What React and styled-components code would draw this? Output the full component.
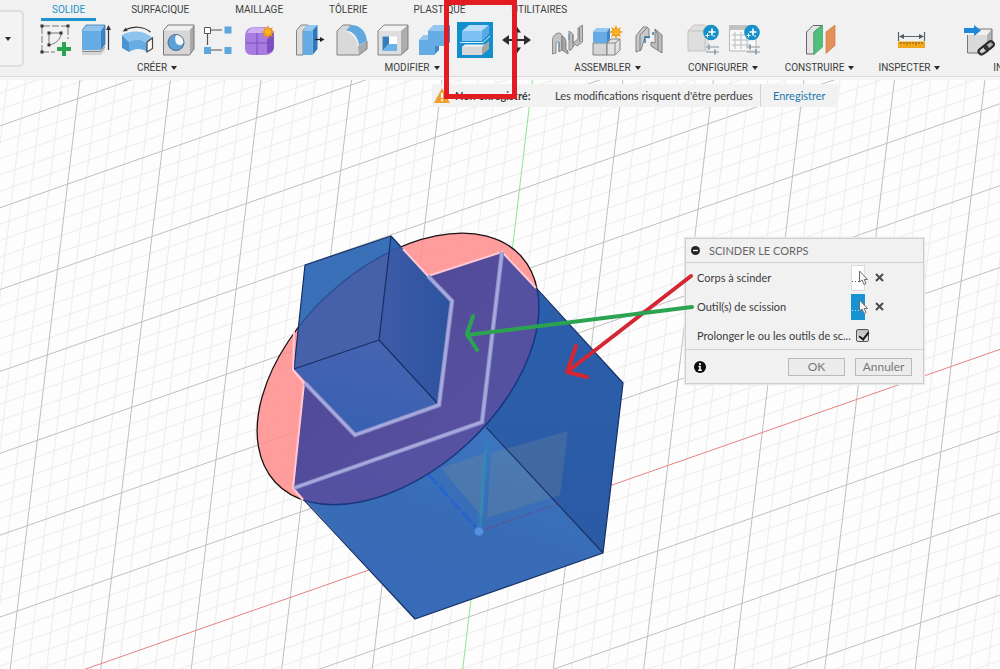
import React from 'react';
import styled, { createGlobalStyle, css } from 'styled-components';

const GlobalStyle = createGlobalStyle`
  * { box-sizing: border-box; }
  html, body { margin: 0; padding: 0; }
  body {
    font-family: Roboto, "Liberation Sans", Arial, sans-serif;
    color: #3c3c3c;
    background: #fdfdfd;
    overflow: hidden;
  }
  button { font-family: inherit; color: inherit; }
`;

const Page = styled.div`
  position: relative;
  display: flex;
  flex-direction: column;
  min-height: 100vh;
  overflow: hidden;
`;

const Toolbar = styled.header`
  display: flex;
  height: 80px;
  background: #f1f1f1;
  border-bottom: 3px solid #f6f6f6;
  box-shadow: inset 0 -1px 0 #dadada;
  overflow: hidden;
`;

const WorkspaceButton = styled.button`
  flex: none;
  display: flex;
  align-items: center;
  width: 24px;
  height: 57px;
  margin: 10px 8px 0 0;
  padding: 0 0 0 5px;
  background: #f3f3f3;
  border: 2px solid #dedede;
  border-left: 0;
  border-radius: 0 5px 5px 0;
`;

const Caret = styled.span`
  display: inline-block;
  flex: none;
  border: 3px solid transparent;
  border-top: 4px solid #2b2b2b;
  border-bottom: 0;
`;

const Ribbon = styled.div`
  flex: 1;
  min-width: 0;
`;

const Tabs = styled.nav`
  display: flex;
  gap: 24px;
  height: 22px;
  padding-left: 9px;
`;

const Tab = styled.a`
  flex: none;
  height: 21px;
  padding: 0 11px;
  border-bottom: 3px solid ${(p) => (p.$active ? '#1f93cb' : 'transparent')};
  font-size: 10px;
  line-height: 19px;
  color: ${(p) => (p.$active ? '#2393c8' : '#3f3f3f')};
  text-decoration: none;
`;

const Groups = styled.div`
  display: flex;
`;

const Group = styled.section`
  flex: none;
  width: ${(p) => p.$width}px;
  display: flex;
  flex-direction: column;
  align-items: ${(p) => (p.$start ? 'flex-start' : 'center')};
  position: relative;
  & + &::before {
    content: '';
    position: absolute;
    left: 0;
    top: 2px;
    height: 48px;
    border-left: 1px solid #d9d9d9;
  }
`;

const Tools = styled.div`
  display: flex;
  padding-left: ${(p) => (p.$start ? 5 : 0)}px;
`;

const ToolButton = styled.button`
  flex: none;
  width: 41px;
  height: 36px;
  padding: 0;
  border: 0;
  background: none;
  svg { display: block; }
`;

const GroupLabel = styled.button`
  display: flex;
  align-items: center;
  align-self: center;
  gap: 4px;
  margin-top: 2px;
  padding: 0 2px 0 0;
  border: 0;
  background: none;
  font-size: 10px;
  line-height: 16px;
`;

const Viewport = styled.main`
  position: relative;
  flex: 1;
  min-height: 589px;
`;

const Scene = styled.svg`
  position: absolute;
  inset: 0;
  width: 100%;
  height: 100%;
`;

const SaveBar = styled.div`
  position: absolute;
  left: 432px;
  top: 4px;
  display: flex;
  align-items: center;
  height: 23px;
  background: #f2f2f2;
  font-family: Lato, "Liberation Sans", Arial, sans-serif;
  font-size: 11px;
  line-height: 23px;
  white-space: nowrap;
`;

const WarningIcon = styled.svg`
  margin: 0 5px 0 2px;
`;

const SaveTitle = styled.strong`
  width: 100px;
`;

const SaveText = styled.span`
  width: 206px;
  border-right: 1px solid #d4d4d4;
`;

const SaveLink = styled.a`
  padding: 0 12px;
  color: #2079ae;
  text-decoration: none;
`;

const Dialog = styled.form`
  position: absolute;
  left: 685px;
  top: 158px;
  width: 239px;
  background: #f1f1f1;
  border: 1px solid #cfcfcf;
  box-shadow: 0 0 1px 1px #e8e8e8;
  font-family: Lato, "Liberation Sans", Arial, sans-serif;
  font-size: 11px;
`;

const DialogHeader = styled.h2`
  display: flex;
  align-items: center;
  gap: 9px;
  height: 24px;
  margin: 0;
  padding-left: 5px;
  border-bottom: 1px solid #cfcfcf;
  font-size: 11px;
  font-weight: 400;
  color: #666;
`;

const DialogBody = styled.div`
  padding: 0 11px;
`;

const Field = styled.div`
  display: flex;
  align-items: center;
  height: 29px;
`;

const FieldLabel = styled.label`
  width: ${(p) => (p.$wide ? 159 : 154)}px;
  white-space: nowrap;
`;

const PickButton = styled.button`
  display: block;
  width: 20px;
  height: 26px;
  padding: 0;
  border: 0;
  background: none;
  svg { display: block; }
`;

const ClearButton = styled.button`
  display: block;
  width: 9px;
  height: 9px;
  margin-left: 4px;
  padding: 0;
  border: 0;
  background: none;
  svg { display: block; }
`;

const Check = styled.input`
  appearance: none;
  width: 13px;
  height: 13px;
  margin: 0;
  border: 1px solid #555;
  border-radius: 2px;
  background: linear-gradient(#bdbdbd, #e4e4e4);
  position: relative;
  &:checked::after {
    content: '';
    position: absolute;
    left: 4px;
    top: 0;
    width: 4px;
    height: 8px;
    border: solid #161616;
    border-width: 0 2px 2px 0;
    transform: rotate(38deg);
  }
`;

const DialogFooter = styled.footer`
  display: flex;
  align-items: center;
  gap: 10px;
  height: 34px;
  margin-top: -1px;
  padding: 0 11px 0 8px;
  border-top: 1px solid #cfcfcf;
`;

const FooterButton = styled.button`
  width: 57px;
  height: 18px;
  padding: 0;
  border: 1px solid #b9b9b9;
  background: #ececec;
  color: #777;
  font-size: 12px;
  line-height: 16px;
  ${(p) => p.$first && css`margin-left: auto;`}
`;

const Annotations = styled.svg`
  position: absolute;
  inset: 0;
  width: 100%;
  height: 100%;
  pointer-events: none;
`;

/* ---------- ribbon icons, drawn on a 41 x 36 cell ---------- */

const Icon = ({ children }) => (
  <svg width="41" height="36" viewBox="0 0 41 36" aria-hidden="true">{children}</svg>
);

const Star = ({ x, y }) => (
  <g transform={`translate(${x} ${y})`}>
    <path d="M0-7 1.5-3 5-5 3.4-1.4 7 0 3.4 1.4 5 5 1.5 3.4 0 7-1.5 3.4-5 5-3.4 1.4-7 0-3.4-1.4-5-5-1.5-3Z" fill="#f29a11" />
    <circle r="2.8" fill="#fbb52c" />
  </g>
);

const SketchIcon = () => (
  <Icon>
    <path d="M7 30V4H33V17M7 30H20" fill="none" stroke="#777" strokeDasharray="7 2" />
    <path d="M14 23V11H26C26 17 21 22 14 23Z" fill="none" stroke="#777" />
    <g fill="#333">
      <path d="M5.500 2.500h3v3h-3zM31.500 2.500h3v3h-3zM5.500 28.500h3v3h-3zM12.500 9.500h3v3h-3zM24.500 9.500h3v3h-3zM12.500 21.500h3v3h-3z" />
    </g>
    <path d="M27 20h4v5h5v4h-5v5h-4v-5h-5v-4h5z" fill="#2aa54b" />
  </Icon>
);

const ExtrudeIcon = () => (
  <Icon>
    <path d="M6 28H25L29 22V28L25 33H6Z" fill="#d5d5d5" />
    <path d="M6 29.500H25L29 24.500" fill="none" stroke="#8d8d8d" />
    <path d="M6 8.500 10 3H29L25 8.500Z" fill="#8dc4ef" />
    <path d="M25 8.500 29 3V22.500L25 28Z" fill="#3c83c4" />
    <path d="M6 8.500H25V28H6Z" fill="#64ace3" />
    <path d="M6 8.500 10 3H29V22.500" fill="none" stroke="#4179a8" strokeWidth=".8" />
    <path d="M32.500 28V6" stroke="#333" strokeWidth="1.2" />
    <path d="M32.500 3 35 8H30Z" fill="#333" />
  </Icon>
);

const RevolveIcon = () => (
  <Icon>
    <path d="M5 13C13 8 27 8 35.500 16L30 21C25 17 18 17 12 20Z" fill="#8dc4ef" />
    <path d="M5 13 12 20V30L5 26Z" fill="#4a92d0" />
    <path d="M12 20C18 16.500 25 17 30 21V30C25 26 18 26 12 30Z" fill="#64ace3" />
    <path d="M30 20 35.500 16V26.500L30 30Z" fill="#fff" stroke="#444" strokeWidth="1.200" />
    <path d="M8 8C16 4 26 4 33.500 10" fill="none" stroke="#333" strokeWidth="1.200" />
    <path d="M5.500 9.500 9 5.500 10.500 9Z" fill="#333" />
  </Icon>
);

const HoleIcon = () => (
  <Icon>
    <path d="M5.500 8.500 10 3H36L31.500 8.500Z" fill="#f0f0f0" />
    <path d="M31.500 8.500 36 3V27L31.500 33Z" fill="#a9a9a9" />
    <path d="M5.500 8.500H31.500V33H5.500Z" fill="#d6d6d6" />
    <path d="M5.500 8.500 10 3H36V27L31.500 33H5.500Z" fill="none" stroke="#777" />
    <circle cx="18" cy="20.500" r="8" fill="#5c9fd9" stroke="#55687a" />
    <path d="M18 13A7.500 7.500 0 0 1 25.500 20C25 23 22 24 19.500 22.500C17 20.500 16.500 16 18 13Z" fill="#f5f8fb" />
  </Icon>
);

const PatternIcon = () => (
  <Icon>
    <path d="M12 8H25M8.500 12V24M12 28H25" stroke="#555" strokeWidth="1.200" strokeDasharray="11 2" />
    <path d="M5.500 5.500h6v6h-6z" fill="#fff" stroke="#555" />
    <path d="M25.500 4.500h7v7h-7zM5 25h7v7h-7zM25.500 25h7v7h-7z" fill="#5ba7de" />
  </Icon>
);

const FormIcon = () => (
  <Icon>
    <path d="M5 15C5 7 10 5 16 5H26C32 5 34 9 34 14V24C34 30 30 33 25 33H12C7 33 5 30 5 26Z" fill="#a77be0" />
    <path d="M7 11C9 6 13 5 18 5.500H27C31 6 32 8 27 11Z" fill="#cdb0f3" />
    <path d="M27 12C31 8 34 9 34 14V24C34 29 31 31 27 31Z" fill="#7d4fc0" />
    <path d="M17 11V33M6 21H27L34 16" fill="none" stroke="#7b4fc0" />
    <Star x={28} y={10} />
  </Icon>
);

const PressPullIcon = () => (
  <Icon>
    <path d="M6.500 8.500 11 3H18L13 8.500V33H6.500Z" fill="#dcdcdc" stroke="#777" strokeWidth=".9" />
    <path d="M13 8.500 17.500 3H27.500L22.500 8.500Z" fill="#93c8f2" />
    <path d="M22.500 8.500 27.500 3V27L22.500 33Z" fill="#2e78bd" />
    <path d="M13 8.500H22.500V33H13Z" fill="#64ace3" />
    <path d="M25 17.500H31" stroke="#222" strokeWidth="1.300" />
    <path d="M34.500 17.500 30 15V20Z" fill="#222" />
  </Icon>
);

const FilletIcon = () => (
  <Icon>
    <path d="M6 9 12 3H20L22 7L14 9C21 11 26 17 27 24L36 20V27L28 33H6Z" fill="#d9d9d9" />
    <path d="M27 24 36 19V27L28 33Z" fill="#ababab" />
    <path d="M15 8.500 20 3C29 3 35 9 36 19L28 23C27 15 22 9 15 8.500Z" fill="#60a8df" />
    <path d="M20 3H12L6 9V33H28L36 27V19" fill="none" stroke="#777" strokeWidth=".9" />
  </Icon>
);

const ShellIcon = () => (
  <Icon>
    <path d="M6 9 12 3H36L29 9Z" fill="#f2f2f2" />
    <path d="M29 9 36 3V27L29 33Z" fill="#adadad" />
    <path d="M6 9H29V33H6Z" fill="#dedede" />
    <path d="M6 9 12 3H36V27L29 33H6Z" fill="none" stroke="#777" strokeWidth=".9" />
    <path d="M10.500 14.500H25V29H10.500Z" fill="#fff" />
    <path d="M10.500 14.500H17V22L10.500 29Z" fill="#347cbd" />
    <path d="M10.500 29 17 22H25V29Z" fill="#6bb2e8" />
  </Icon>
);

const CombineIcon = () => (
  <Icon>
    <path d="M6 18 11 13H15V9L21 3H37V20L33 24H26V28L21 33H6Z" fill="#3f86c6" />
    <path d="M6 18H15V9H32V24H22V33H6Z" fill="#64ace3" />
    <path d="M6 18 11 13H15V18ZM15 9 21 3H37L32 9Z" fill="#93c8f2" />
  </Icon>
);

const SplitIcon = () => (
  <Icon>
    <path d="M3 0H39V36H3Z" fill="#148fcd" />
    <path d="M8 9 15 3H35L28 9Z" fill="#b3dcfb" />
    <path d="M28 9 35 3V12L28 19Z" fill="#5aa9e2" />
    <path d="M8 9H28V19H8Z" fill="#7dc0f2" />
    <path d="M6 20.500H29L36 14" fill="none" stroke="#d9eefb" />
    <path d="M8 25 11 22.500H31L28 25Z" fill="#f4f4f4" />
    <path d="M28 25 35 19V27L28 33Z" fill="#a6a6a6" />
    <path d="M8 24.500H28V33H8Z" fill="#d8d8d8" />
  </Icon>
);

const MoveIcon = () => (
  <Icon>
    <path d="M12 18H31M21.500 9V27" stroke="#2d2d2d" strokeWidth="2" />
    <path d="M7 18 14 13V23ZM36 18 29 13V23ZM21.500 4 17 10.500H26ZM21.500 32 17 25.500H26Z" fill="#2d2d2d" />
  </Icon>
);

const JointIcon = () => (
  <Icon>
    <g stroke="#777" strokeWidth=".8" strokeLinejoin="round">
      <path d="M5.500 32V18C6 13 9 11 13 11L15 13V28L12 30V21C10 19 9 20 9 22V31Z" fill="#c4c4c4" />
      <path d="M15 14C18 15 19 18 19 21V27L21 29V32L15 28Z" fill="#a5a5a5" />
      <path d="M22 28V9L26 12V21L31 17V6L35.500 3V20L30 24L28 22L24 28Z" fill="#bdbdbd" />
      <path d="M26 13V25M32.500 6V20" fill="none" />
    </g>
    <path d="M12 20V29M22 12V18" stroke="#5d8fb0" />
  </Icon>
);

const ComponentIcon = () => (
  <Icon>
    <path d="M5 21H19V33H5Z" fill="#d5d5d5" stroke="#777" strokeWidth=".9" />
    <path d="M19 21 23 17H32V28L27 33H19Z" fill="#e2e2e2" stroke="#777" strokeWidth=".9" />
    <path d="M19 21H27L32 17M27 21V33" fill="none" stroke="#888" />
    <path d="M5 10 9 6H22V17L19 21H5Z" fill="#3f86c6" />
    <path d="M5 10H19V21H5Z" fill="#64ace3" />
    <path d="M5 10 9 6H22L19 10Z" fill="#93c8f2" />
    <Star x={28} y={10} />
  </Icon>
);

const AsBuiltIcon = () => (
  <Icon>
    <g stroke="#777" strokeWidth=".9" strokeLinejoin="round">
      <path d="M7 14 14 5H18L20 7V16L16 15L12 28L7 30Z" fill="#c8c8c8" />
      <path d="M11 13 18 6M11 13V29" fill="none" />
      <path d="M26 7 33 13V31L22 24V20L26 21Z" fill="#bdbdbd" />
      <path d="M26 7 29 13V28" fill="none" />
    </g>
    <path d="M16 21V15H21M24 10V13" fill="none" stroke="#2674a9" strokeWidth="1.400" />
  </Icon>
);

const Badge = () => (
  <g>
    <circle cx="28" cy="10.500" r="7.800" fill="#1590c8" />
    <path d="M29 6.500V13.500M25.500 10H32.500" stroke="#fff" strokeWidth="1.600" />
    <path d="M24.500 11.500V15.500M22.500 13.500H26.500M31 13V15" stroke="#fff" />
    <path d="M23 25H36M23 30H36" stroke="#a9b3ba" strokeWidth="1.400" />
    <path d="M26 22.500V27.500M32 27.500V32.500" stroke="#8da4b5" strokeWidth="2" />
  </g>
);

const ConfigureIcon = () => (
  <Icon>
    <path d="M5 9 11 3H26V29H5Z" fill="#dedede" />
    <path d="M5 9H22V29H5ZM5 9 11 3H22" fill="none" stroke="#c2c2c2" />
    <Badge />
  </Icon>
);

const TableIcon = () => (
  <Icon>
    <path d="M5.500 3.500H32V29H5.500Z" fill="#f8f8f8" stroke="#b5b5b5" />
    <path d="M5 3H32V8H5Z" fill="#c2c2c2" />
    <path d="M7 5h3M8 13H26M8 18H26M8 23H26M11 10V27M17 10V27M23 10V27" stroke="#b5bcc2" />
    <Badge />
  </Icon>
);

const PlaneIcon = () => (
  <Icon>
    <path d="M6.500 10 13 3.500H22L14 10V32H6.500Z" fill="#e4e4e4" stroke="#666" />
    <path d="M14 10 22.500 3V25L14 32.500Z" fill="#4fc07b" stroke="#38a363" strokeWidth=".7" />
    <path d="M26 10 35 3V23.500L26 31.500Z" fill="#e48f5b" stroke="#cd7841" strokeWidth=".7" />
  </Icon>
);

const MeasureIcon = () => (
  <Icon>
    <path d="M8.500 10V19M34.500 10V19M11 14.500H32" stroke="#566" strokeWidth="1.200" />
    <path d="M9 14.500 14 12V17ZM34 14.500 29 12V17Z" fill="#556" />
    <path d="M8 19.500H35V26H8Z" fill="#f2a81d" />
    <path d="M11 20V22M14 20V22M17 20V23M20 20V22M23 20V22M26 20V23M29 20V22M32 20V22" stroke="#7e5714" />
  </Icon>
);

const InsertIcon = () => (
  <Icon>
    <path d="M9.500 13 15 7H34L29 13Z" fill="#f0f0f0" />
    <path d="M29 13 34 7V26L29 31Z" fill="#b2b2b2" />
    <path d="M9.500 13H29V31H9.500Z" fill="#dadada" />
    <path d="M9.500 13V31H27M15 7H34V22" fill="none" stroke="#777" />
    <path d="M6 6H16V3L23 8.500L16 14V11H6Z" fill="#2088d8" />
    <g fill="none" stroke="#2d2d2d" strokeWidth="2.200" transform="rotate(-38 28 26)">
      <rect x="19.500" y="23" width="10" height="6" rx="3" />
      <rect x="27" y="23" width="10" height="6" rx="3" />
    </g>
  </Icon>
);

const TABS = ['SOLIDE', 'SURFACIQUE', 'MAILLAGE', 'TÔLERIE', 'PLASTIQUE', 'UTILITAIRES'];

const GROUPS = [
  { name: 'CRÉER', width: 252, tools: [
    ['Esquisse', SketchIcon], ['Extrusion', ExtrudeIcon], ['Révolution', RevolveIcon],
    ['Perçage', HoleIcon], ['Réseau', PatternIcon], ['Forme', FormIcon]] },
  { name: 'MODIFIER', width: 258, tools: [
    ['Appuyer/Tirer', PressPullIcon], ['Congé', FilletIcon], ['Coque', ShellIcon],
    ['Combiner', CombineIcon], ['Scinder le corps', SplitIcon], ['Déplacer', MoveIcon]] },
  { name: 'ASSEMBLER', width: 133, tools: [
    ['Liaison', JointIcon], ['Nouveau composant', ComponentIcon], ['Liaison telle que construite', AsBuiltIcon]] },
  { name: 'CONFIGURER', width: 98, tools: [['Configuration', ConfigureIcon], ['Tableau', TableIcon]] },
  { name: 'CONSTRUIRE', width: 95, tools: [['Plan', PlaneIcon]] },
  { name: 'INSPECTER', width: 85, tools: [['Mesurer', MeasureIcon]] },
  { name: 'INSÉRER', width: 132, start: true, tools: [['Insérer un lien', InsertIcon]] },
];

/* ---------- canvas ---------- */

const ORIGIN = [479, 531.5];
const U = [94.4, -33];
const V = [-10.1, 85.4];

const at = (i, j) => [ORIGIN[0] + i * U[0] + j * V[0], ORIGIN[1] + i * U[1] + j * V[1]];
const segment = (a, b) => `M${a[0].toFixed(1)} ${a[1].toFixed(1)}L${b[0].toFixed(1)} ${b[1].toFixed(1)}`;

const gridPath = (major) => {
  let d = '';
  for (let n = -60; n <= 60; n += 1) {
    if (n === 0 || (n % 5 === 0) !== major) continue;
    const k = n / 5;
    d += segment(at(k, -14), at(k, 14)) + segment(at(-14, k), at(14, k));
  }
  return d;
};

const MINOR = gridPath(false);
const MAJOR = gridPath(true);

const RIGHT_FACE = '502,252 623,383 603,553 482,422';
const FRONT_FACE = '294,488 482,422 603,553 415,619';
const SLOT = '428,276 502,252 482,422 294,488 305,383 355,435 439,405 452,301';
const CUBE = '391,236 452,301 439,405 355,435 294,369 305,265';

const Disc = (props) => (
  <ellipse cx="398" cy="369" rx="167" ry="102" transform="rotate(-42.700 398 369)" {...props} />
);

const Model = () => (
  <Scene viewBox="0 80 1000 589" preserveAspectRatio="xMidYMid slice" aria-label="Vue 3D">
    <defs>
      <clipPath id="lower">
        <polygon points={RIGHT_FACE} />
        <polygon points={FRONT_FACE} />
        <polygon points={SLOT} />
      </clipPath>
      <clipPath id="cube"><polygon points={CUBE} /></clipPath>
      <clipPath id="discClip"><Disc /></clipPath>
      <linearGradient id="right" x1="0" y1="0" x2="0" y2="1">
        <stop offset="0" stopColor="#2b60ac" /><stop offset="1" stopColor="#2b5aa5" />
      </linearGradient>
      <linearGradient id="front" x1="0.8" y1="0" x2="0.3" y2="1">
        <stop offset="0" stopColor="#3d77c2" /><stop offset=".5" stopColor="#386cb6" /><stop offset="1" stopColor="#386bb8" />
      </linearGradient>
      <linearGradient id="slot" x1="0" y1="0" x2="1" y2="1">
        <stop offset="0" stopColor="#4b4391" /><stop offset="1" stopColor="#5a54a2" />
      </linearGradient>
      <linearGradient id="cubeRight" x1="0" y1="0" x2="1" y2="0">
        <stop offset="0" stopColor="#3f5ba8" /><stop offset="1" stopColor="#2c539f" />
      </linearGradient>
      <linearGradient id="cubeFront" x1="0.7" y1="0" x2="0.4" y2="1">
        <stop offset="0" stopColor="#4663b1" /><stop offset="1" stopColor="#3861b1" />
      </linearGradient>
    </defs>

    <rect x="-1000" y="-1000" width="3000" height="3000" fill="#fdfdfd" />
    <path d={MINOR} stroke="#ececec" fill="none" />
    <path d={MAJOR} stroke="#c0c0c0" fill="none" />
    <path d={segment(at(-14, 0), at(14, 0))} stroke="#e58282" />
    <path d={segment(at(0, -14), at(0, 14))} stroke="#8be78f" />

    <Disc fill="#ff8c8c" fillOpacity=".85" stroke="#1b1014" strokeWidth="1.300" />

    <polygon points={SLOT} fill="#4c4694" />
    <polygon points={RIGHT_FACE} fill="url(#right)" />
    <polygon points={FRONT_FACE} fill="url(#front)" />

    <polygon points="441,468 485,453 483,518" fill="#7e8e94" opacity=".28" />
    <polygon points="491,453 568,431 560,495 487,518" fill="#7b8b94" opacity=".28" />
    <path d="M487 440 479 528" stroke="#2495bd" strokeWidth="6" opacity=".22" />
    <path d="M486 450 480 527" stroke="#2aa4b4" strokeWidth="2" opacity=".3" />
    <path d="M428 474 479 531" stroke="#1e62d8" strokeWidth="2.500" strokeDasharray="14 3" opacity=".8" />
    <path d="M483 530 560 503" stroke="#634d91" strokeWidth="2" strokeDasharray="16 3" opacity=".5" />
    <circle cx="479" cy="531.500" r="4.500" fill="#568fdf" stroke="#3f77c8" />

    <g clipPath="url(#lower)">
      <Disc fill="#5650a0" fillOpacity=".95" stroke="#17377f" strokeWidth="1.500" />
    </g>
    <polygon points={SLOT} fill="url(#slot)" opacity=".75" />

    <polygon points="391,236 305,265 294,369 379,340" fill="#3a70b7" />
    <polygon points="391,236 452,301 439,405 379,340" fill="#3065b2" />
    <polygon points="294,369 379,340 439,405 355,435" fill="url(#cubeFront)" />
    <g clipPath="url(#cube)">
      <Disc fill="#4660aa" stroke="#2d5095" strokeWidth="1.500" />
      <g clipPath="url(#discClip)">
        <polygon points="391,236 452,301 439,405 379,340" fill="url(#cubeRight)" />
        <polygon points="294,369 379,340 439,405 355,435" fill="url(#cubeFront)" />
      </g>
    </g>

    <g fill="none" stroke="#162f66" strokeWidth="1.200" strokeLinejoin="round">
      <path d="M537 289 623 383 603 553 415 619 304 500M486 427 603 553" />
      <path d="M401 247 391 236 305 265 294 369 379 340 439 405M391 236 379 340" />
    </g>
    <g fill="none" stroke="#ffc8d2" strokeWidth="2" strokeLinejoin="round">
      <path d="M403 249 428 276 502 252 536 288" />
      <path d="M294 331 293 370 304 383 293 488 303 500" />
    </g>
    <g fill="none" stroke="#8b90cc" strokeWidth="4.500">
      <path d="M305 383 355 435 439 405 452 301 428 276M502 252 482 422 294 488" />
    </g>
    <g fill="none" stroke="#a9abdd" strokeWidth="2.200">
      <path d="M305 383 355 435 439 405 452 301 428 276M502 252 482 422 294 488" />
    </g>
  </Scene>
);

const Picker = ({ active }) => (
  <svg width="20" height="26" viewBox="0 0 20 26" aria-hidden="true">
    <rect x=".5" y=".5" width="13" height="25" fill={active ? '#1693d3' : '#fff'} stroke={active ? '#1693d3' : '#ddd'} />
    <path d="M1 16.500h1M4 16.500h1M7 16.500h1" stroke={active ? '#cfe9f7' : '#666'} />
    <path d="M8.500 6V17L11 15L13 19.500L15 18.500L13.200 14.500H16.500Z" fill="#f8f8f8" stroke="#6c6c6c" />
  </svg>
);

const PickField = ({ id, label, active }) => (
  <Field>
    <FieldLabel htmlFor={id}>{label}</FieldLabel>
    <PickButton id={id} type="button"><Picker active={active} /></PickButton>
    <ClearButton type="button" aria-label="Effacer">
      <svg width="9" height="9" viewBox="0 0 9 9"><path d="M1 1 8 8M8 1 1 8" stroke="#4b4b4b" strokeWidth="2" /></svg>
    </ClearButton>
  </Field>
);

export default function App() {
  return (
    <Page>
      <GlobalStyle />
      <Toolbar>
        <WorkspaceButton type="button" aria-label="Espace de travail"><Caret /></WorkspaceButton>
        <Ribbon>
          <Tabs>
            {TABS.map((tab, i) => <Tab key={tab} href="#" $active={i === 0}>{tab}</Tab>)}
          </Tabs>
          <Groups>
            {GROUPS.map((g) => (
              <Group key={g.name} $width={g.width} $start={g.start}>
                <Tools $start={g.start}>
                  {g.tools.map(([name, Drawing]) => (
                    <ToolButton key={name} type="button" aria-label={name}><Drawing /></ToolButton>
                  ))}
                </Tools>
                <GroupLabel type="button">{g.name}<Caret /></GroupLabel>
              </Group>
            ))}
          </Groups>
        </Ribbon>
      </Toolbar>

      <Viewport>
        <Model />
        <SaveBar>
          <WarningIcon width="16" height="15" viewBox="0 0 16 15" aria-hidden="true">
            <path d="M8 0 16 15H0Z" fill="#f0a032" />
            <path d="M8 5V10M8 11.500V13" stroke="#fff" strokeWidth="2" />
          </WarningIcon>
          <SaveTitle>Non enregistré:</SaveTitle>
          <SaveText>Les modifications risquent d'être perdues</SaveText>
          <SaveLink href="#">Enregistrer</SaveLink>
        </SaveBar>

        <Dialog onSubmit={(e) => e.preventDefault()}>
          <DialogHeader>
            <svg width="9" height="9" viewBox="0 0 9 9" aria-hidden="true">
              <circle cx="4.500" cy="4.500" r="4.500" fill="#222" /><path d="M2 4.500H7" stroke="#fff" strokeWidth="1.300" />
            </svg>
            SCINDER LE CORPS
          </DialogHeader>
          <DialogBody>
            <PickField id="body" label="Corps à scinder" />
            <PickField id="tool" label="Outil(s) de scission" active />
            <Field>
              <FieldLabel htmlFor="extend" $wide>Prolonger le ou les outils de sc...</FieldLabel>
              <Check id="extend" type="checkbox" defaultChecked />
            </Field>
          </DialogBody>
          <DialogFooter>
            <svg width="12" height="12" viewBox="0 0 12 12" aria-hidden="true">
              <circle cx="6" cy="6" r="6" fill="#0c0c0c" />
              <path d="M6 2V4M4.500 5.500H6V9M4.200 9.300H7.800" stroke="#fff" strokeWidth="1.600" fill="none" />
            </svg>
            <FooterButton $first>OK</FooterButton>
            <FooterButton type="button">Annuler</FooterButton>
          </DialogFooter>
        </Dialog>
      </Viewport>

      <Annotations viewBox="0 0 1000 669" preserveAspectRatio="xMinYMin slice" aria-hidden="true">
        <g fill="none" strokeLinecap="round" strokeLinejoin="round">
          <path d="M691 276 567 372M576 346 567 372 587 377" stroke="#d42633" strokeWidth="4" />
          <path d="M692 307 467 335M473 316 467 334 477 350" stroke="#2ba350" strokeWidth="4" />
        </g>
        <rect x="446.500" y="2.500" width="68" height="94" fill="none" stroke="#e31b23" strokeWidth="5" />
      </Annotations>
    </Page>
  );
}
